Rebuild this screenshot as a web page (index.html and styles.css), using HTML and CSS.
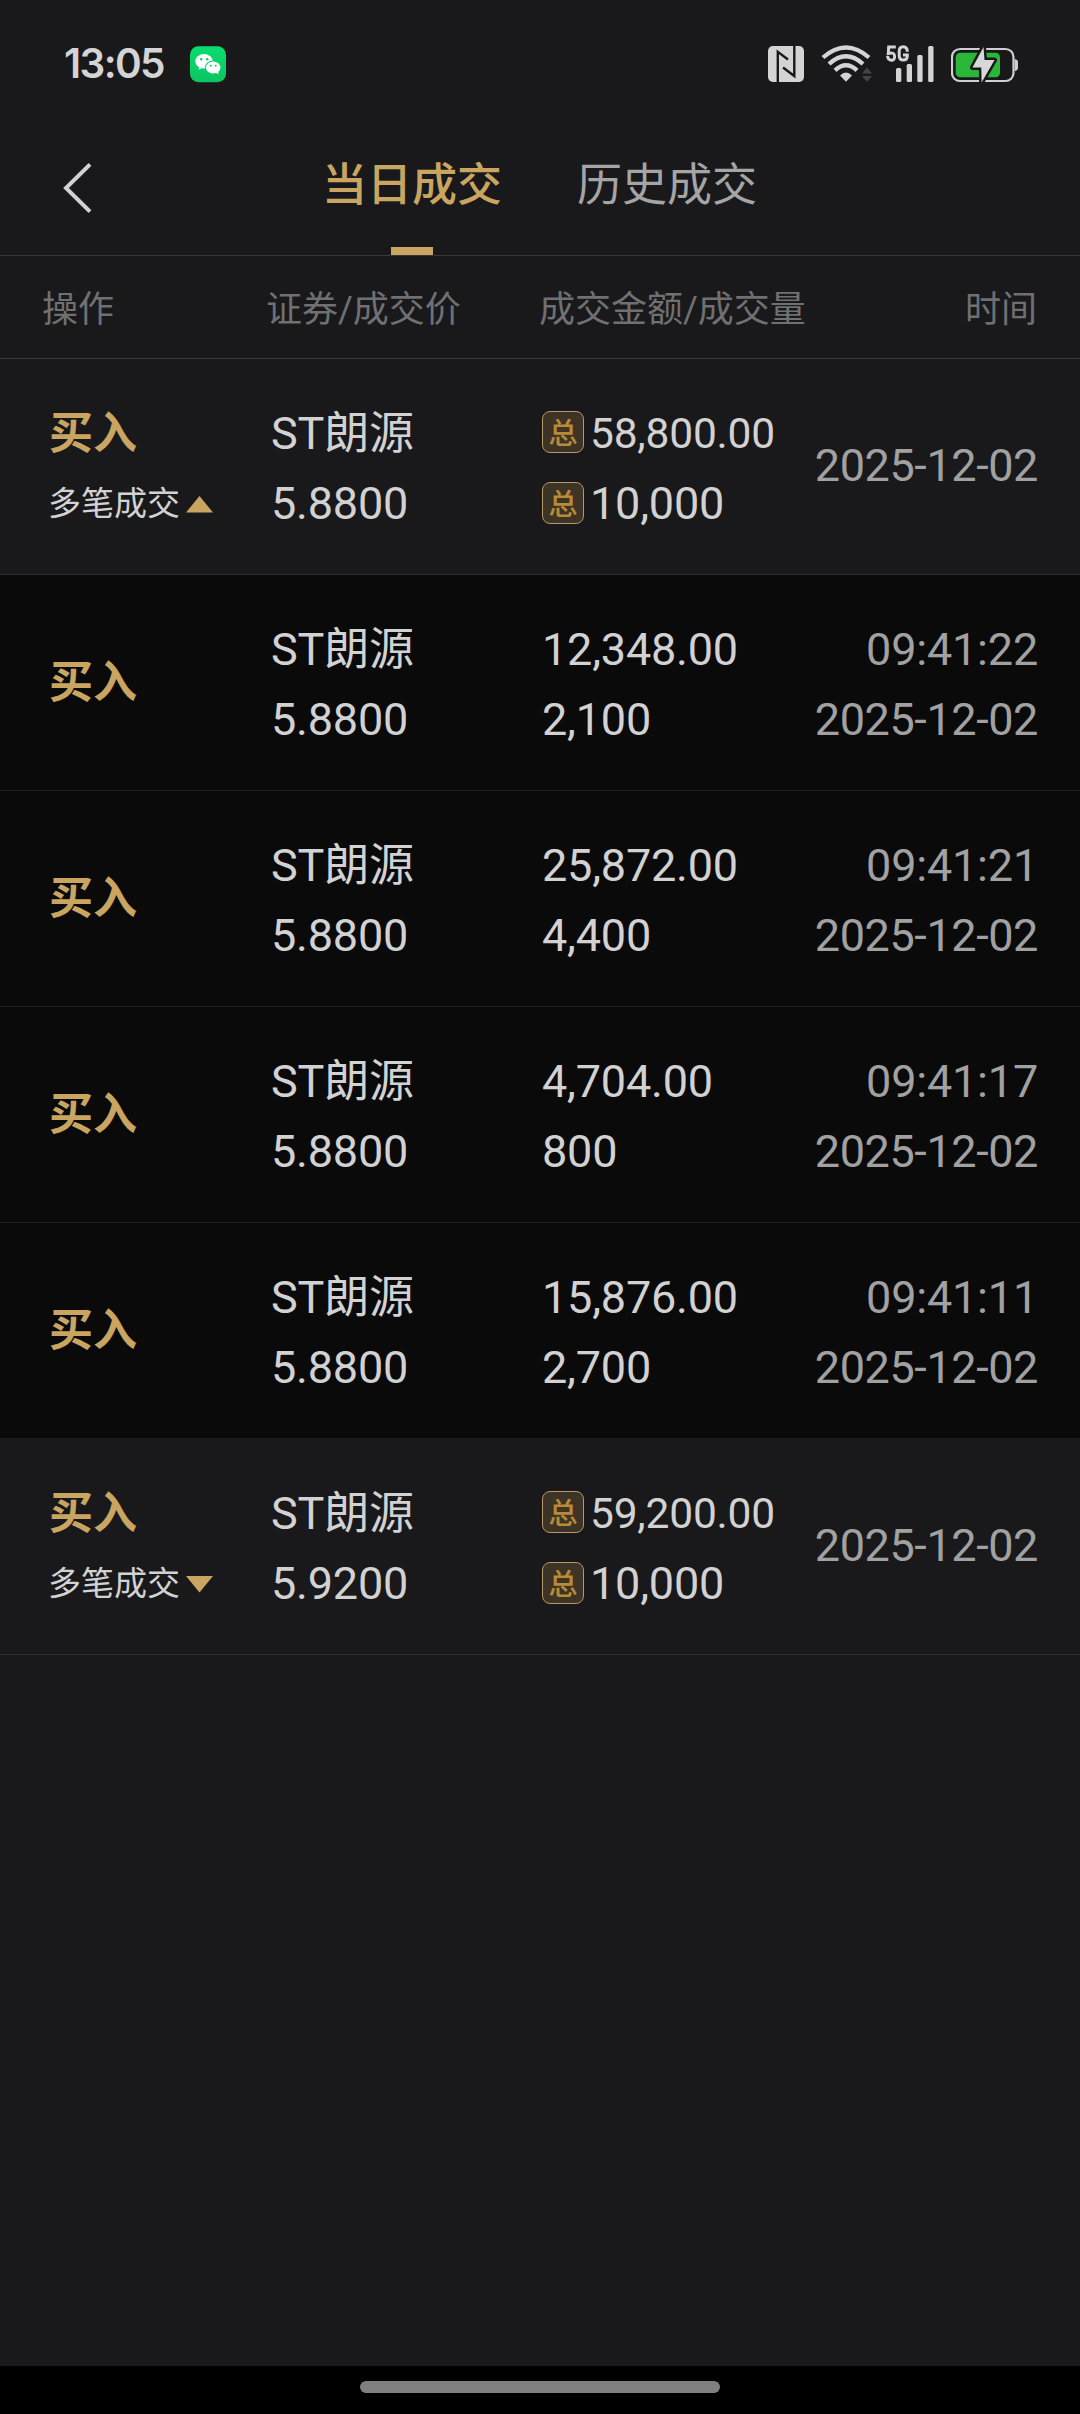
FILE: index.html
```html
<!DOCTYPE html>
<html lang="zh-CN">
<head>
<meta charset="utf-8">
<title>当日成交</title>
<link rel="stylesheet" href="styles.css">
</head>
<body>
<div class="screen">
  <header class="status">
    <span class="clock">13:05</span>
    <svg class="wechat" width="36" height="40" viewBox="190 44 36 40">
      <defs><linearGradient id="wx" x1="0" y1="0" x2="0" y2="1"><stop offset="0" stop-color="#09dd6f"/><stop offset="1" stop-color="#0ac562"/></linearGradient></defs>
      <rect x="190" y="46.3" width="36" height="36" rx="8.5" fill="url(#wx)"/>
      <path d="M199.500 66 L198.600 69.800 L203 67.500 Z" fill="#fff"/>
      <ellipse cx="204" cy="61.300" rx="8.700" ry="7.300" fill="#fff"/>
      <circle cx="201.200" cy="59.300" r="1.200" fill="#0bcf68"/><circle cx="207.200" cy="59.300" r="1.200" fill="#0bcf68"/>
      <ellipse cx="213.200" cy="67.500" rx="8.200" ry="7" fill="#0ccf67"/>
      <path d="M214.500 72 L218.600 74.300 L218 70.500 Z" fill="#fff"/>
      <ellipse cx="213.200" cy="67.500" rx="7.300" ry="6.100" fill="#fff"/>
      <circle cx="210.800" cy="65.700" r="1" fill="#0bcf68"/><circle cx="215.700" cy="65.700" r="1" fill="#0bcf68"/>
    </svg>
    <div class="status-icons">
      <svg width="36" height="40" viewBox="768 44 36 40">
        <rect x="768" y="46" width="36" height="36" rx="5" fill="#d4d4d5"/>
        <path d="M777.800 82 V51.800 L788 59.500 M794.300 46 V76 L783 67.500" fill="none" stroke="#19191b" stroke-width="2.400"/>
      </svg>
      <svg class="wifi" width="52" height="40" viewBox="821 44 52 40">
        <g fill="none" stroke="#d4d4d5" stroke-width="4.300">
          <path d="M823 57.500 Q846 37.500 869 57.500"/>
          <path d="M829 64 Q846 48.500 863 64"/>
          <path d="M835 70.300 Q846 60.300 857 70.300"/>
        </g>
        <path d="M840 75.500 Q846 69.500 852 75.500 L846 81.700 Z" fill="#d4d4d5"/>
        <path d="M862 73.500 L867 67.500 L872 73.500 Z M862 76 L867 81.700 L872 76 Z" fill="#454548"/>
      </svg>
      <svg class="signal" width="48" height="40" viewBox="886 44 48 40">
        <g fill="none" stroke="#d4d4d5" stroke-width="3">
          <path d="M895.800 47 H888.700 L888.300 53.500 Q894.600 51.500 894.600 56.500 Q894.600 61 890.500 60 Q887.800 59.500 887.600 56"/>
          <path d="M907.300 51.800 Q907.300 46.800 903.300 46.800 Q899.200 46.800 899.200 51.500 V55.500 Q899.200 60 903.300 60 Q907.300 60 907.300 56 V55 H903"/>
        </g>
        <g fill="#d4d4d5"><rect x="896" y="68" width="5.300" height="14" rx="1.500"/><rect x="906.700" y="64" width="5.300" height="18" rx="1.500"/><rect x="917.300" y="55" width="5.300" height="27" rx="1.500"/><rect x="928.200" y="46" width="5.300" height="36" rx="1.500"/></g>
      </svg>
      <svg class="battery" width="68" height="40" viewBox="951 44 68 40">
        <rect x="952" y="49" width="61.500" height="32" rx="8" fill="none" stroke="#cfcfd0" stroke-width="2.200"/>
        <path d="M1014.600 59 Q1018 59.500 1018 62 V68 Q1018 70.500 1014.600 71 Z" fill="#cfcfd0"/>
        <rect x="955.700" y="52.700" width="44.300" height="24.500" rx="4.500" fill="#2ab637"/>
        <path d="M983.500 47 L972.500 67.500 H981.300 L981.600 82.500 L994.500 60 H984.500 Z" fill="#d8d8d9" stroke="#19191b" stroke-width="5" paint-order="stroke" stroke-linejoin="round"/>
      </svg>
    </div>
  </header>

  <nav class="nav">
    <svg class="back" width="32" height="56" viewBox="62 160 32 56"><path d="M90 164.300 L66 188 L90 211.700" fill="none" stroke="#d2d2d3" stroke-width="4"/></svg>
    <span class="tab tab-active">当日成交</span>
    <span class="tab">历史成交</span>
  </nav>

  <div class="columns head">
    <span>操作</span><span>证券/成交价</span><span>成交金额/成交量</span><span class="head-time">时间</span>
  </div>

  <main class="list">
    <section class="columns row">
      <div class="action"><b>买入</b><span class="multi">多笔成交<svg width="27" height="17" viewBox="0 0 27 17"><path d="M13.500 0 L27 16.500 H0 Z" fill="#c9a561"/></svg></span></div>
      <div class="stock"><span>ST朗源</span><span>5.8800</span></div>
      <div class="amount"><span class="total total-sum"><i>总</i>58,800.00</span><span class="total"><i>总</i>10,000</span></div>
      <div class="time"><span class="date">2025-12-02</span></div>
    </section>
    <section class="columns row detail">
      <div class="action"><b>买入</b></div>
      <div class="stock"><span>ST朗源</span><span>5.8800</span></div>
      <div class="amount"><span>12,348.00</span><span>2,100</span></div>
      <div class="time"><span>09:41:22</span><span class="date">2025-12-02</span></div>
    </section>
    <section class="columns row detail">
      <div class="action"><b>买入</b></div>
      <div class="stock"><span>ST朗源</span><span>5.8800</span></div>
      <div class="amount"><span>25,872.00</span><span>4,400</span></div>
      <div class="time"><span>09:41:21</span><span class="date">2025-12-02</span></div>
    </section>
    <section class="columns row detail">
      <div class="action"><b>买入</b></div>
      <div class="stock"><span>ST朗源</span><span>5.8800</span></div>
      <div class="amount"><span>4,704.00</span><span>800</span></div>
      <div class="time"><span>09:41:17</span><span class="date">2025-12-02</span></div>
    </section>
    <section class="columns row detail">
      <div class="action"><b>买入</b></div>
      <div class="stock"><span>ST朗源</span><span>5.8800</span></div>
      <div class="amount"><span>15,876.00</span><span>2,700</span></div>
      <div class="time"><span>09:41:11</span><span class="date">2025-12-02</span></div>
    </section>
    <section class="columns row">
      <div class="action"><b>买入</b><span class="multi">多笔成交<svg width="27" height="17" viewBox="0 0 27 17"><path d="M0 0 H27 L13.500 16.500 Z" fill="#c9a561"/></svg></span></div>
      <div class="stock"><span>ST朗源</span><span>5.9200</span></div>
      <div class="amount"><span class="total total-sum"><i>总</i>59,200.00</span><span class="total"><i>总</i>10,000</span></div>
      <div class="time"><span class="date">2025-12-02</span></div>
    </section>
  </main>

  <footer class="gesture"><div class="pill"></div></footer>
</div>
</body>
</html>
```

FILE: styles.css
```css
* { box-sizing: border-box; }
body {
  margin: 0;
  background: #19191b;
  color: #d2d2d3;
  font-family: Roboto, "Noto Sans CJK SC", sans-serif;
}
svg { display: block; flex: none; }
.screen {
  width: 1080px;
  height: 2414px;
  display: flex;
  flex-direction: column;
  overflow: hidden;
}

/* Status bar */
.status {
  height: 128px;
  display: flex;
  align-items: center;
  padding: 0 61px 0 64px;
}
.clock {
  width: 126px;
  font: 600 40.500px/50px Inter, sans-serif;
  letter-spacing: -1.600px;
  color: #d4d4d5;
}
.status-icons { display: flex; margin-left: auto; }
.wifi { margin-left: 17px; }
.signal { margin-left: 13px; }
.battery { margin-left: 17px; }

/* Tabs */
.nav {
  height: 128px;
  display: flex;
  align-items: stretch;
  padding-left: 62px;
  border-bottom: 1px solid #38383a;
}
.back { margin: 32px 228px 0 0; }
.tab {
  width: 180px;
  margin-right: 75px;
  display: flex;
  flex-direction: column;
  align-items: center;
  justify-content: space-between;
  padding-top: 23px;
  font-size: 45px;
  line-height: 70px;
  color: #a5a5a6;
}
.tab-active { color: #c9a561; font-weight: 500; }
.tab-active::after {
  content: "";
  width: 42px;
  height: 8px;
  background: #c9a561;
}

/* Shared column grid */
.columns {
  display: grid;
  grid-template-columns: 223px 271px 250px 1fr;
  padding: 0 42px 0 48px;
  border-bottom: 1px solid #2b2b2d;
}
.head {
  height: 103px;
  padding: 0 43px 2px 42px;
  grid-template-columns: 224px 273px 300px 1fr;
  align-items: center;
  font-size: 36px;
  color: #707072;
  border-color: #38383a;
}
.head-time { text-align: right; }

/* Trade rows */
.row {
  height: 216px;
  font-size: 45px;
  line-height: 70px;
}
.row span { white-space: nowrap; }
.detail { background: #0a0a0a; border-color: #1f1f20; }
.action, .stock, .amount, .time {
  display: flex;
  flex-direction: column;
  justify-content: center;
  padding-top: 5px;
}
.stock, .amount, .time { letter-spacing: -0.200px; }
.detail .action { padding-top: 0; }
.action b {
  padding-left: 1px;
  color: #c9a561;
  font-weight: 700;
  font-size: 44px;
}
.multi { display: flex; align-items: center; gap: 6px; font-size: 33px; }
.total { display: flex; align-items: center; }
.total-sum { font-size: 42.500px; }
.total i {
  width: 42px;
  height: 42px;
  margin: 0 6px 2px 0;
  border: 1px solid #b3986a;
  border-radius: 8px;
  background: #3d3425;
  color: #b98a38;
  font: 500 29px/38px "Noto Sans CJK SC", sans-serif;
  text-align: center;
}
.total-sum i { margin-bottom: 4px; }
.time { align-items: flex-end; color: #a1a1a2; }
.date { letter-spacing: -0.400px; }
.time .date:only-child { margin-top: -6px; }

/* Navigation gesture area */
.gesture {
  height: 48px;
  margin-top: auto;
  padding-top: 15px;
  display: flex;
  justify-content: center;
  background: #000;
}
.pill { width: 360px; height: 12px; border-radius: 6px; background: #808080; }
```
